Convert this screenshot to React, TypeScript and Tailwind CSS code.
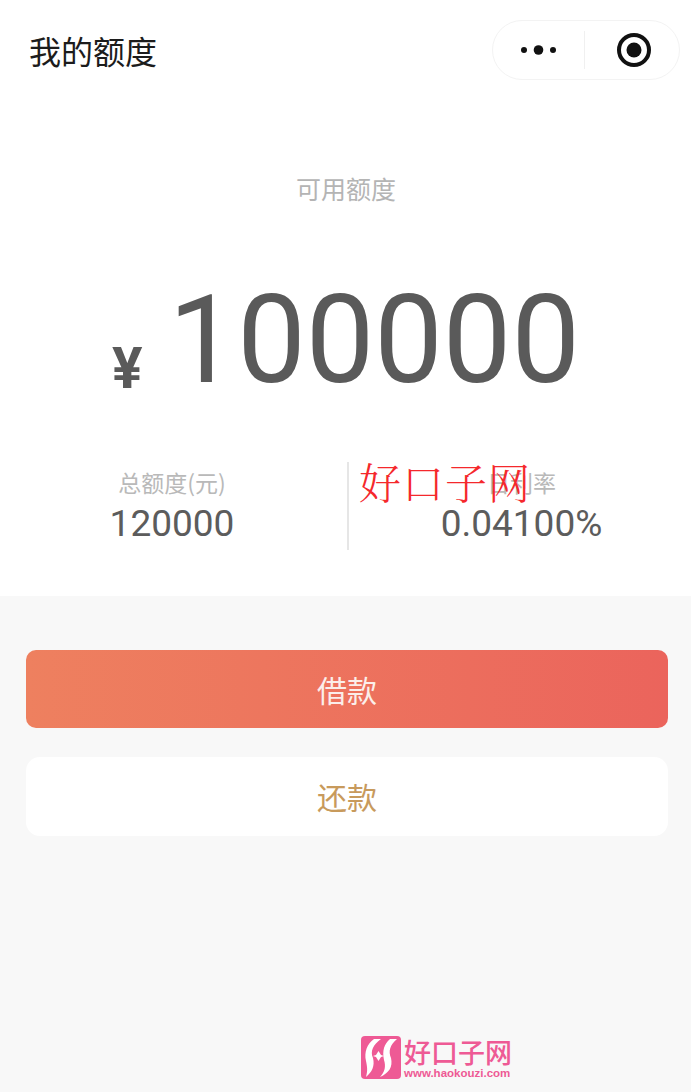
import React from 'react';

const cjk = "font-['Noto_Sans_CJK_SC',sans-serif]";
const num = "font-['Roboto','Noto_Sans_CJK_SC',sans-serif]";

const Stat = ({ label, value, className }: { label: string; value: string; className: string }) => (
  <div className={`flex flex-col items-center ${className}`}>
    <div className={`${cjk} text-[23px] leading-[30px] text-[#b9b9b9]`}>{label}</div>
    <div className={`${num} mt-[6px] text-[37px] leading-[42px] text-[#5c5c5c]`}>{value}</div>
  </div>
);

const App: React.FC = () => {
  return (
    <div className={`relative flex h-[1092px] w-[691px] flex-col overflow-hidden bg-[#f8f8f8] ${cjk}`}>
      <div className="h-[596px] bg-white">
        {/* nav bar */}
        <div className="flex items-center justify-between pl-[29px] pr-[11px] pt-[20px]">
          <h1 className="text-[32px] leading-[60px] font-normal text-[#1c1c1c]">我的额度</h1>
          <div className="flex h-[60px] w-[188px] items-center rounded-full border border-[#f3f3f3] bg-white">
            <div className="flex flex-1 items-center justify-center">
              <svg width="40" height="12" viewBox="0 0 40 12">
                <circle cx="5" cy="6" r="3" fill="#111" />
                <circle cx="19.5" cy="6" r="4.8" fill="#111" />
                <circle cx="34" cy="6" r="3" fill="#111" />
              </svg>
            </div>
            <div className="h-[38px] w-px bg-[#f0f0f0]" />
            <div className="flex w-[94px] items-center justify-center pl-[3px]">
              <svg width="36" height="36" viewBox="0 0 36 36">
                <circle cx="18" cy="18" r="15" fill="none" stroke="#111" strokeWidth="4" />
                <circle cx="18" cy="18" r="7.5" fill="#111" />
              </svg>
            </div>
          </div>
        </div>

        <div className="mt-[93px] pl-[1px] text-center text-[25px] leading-[30px] text-[#b4b4b4]">可用额度</div>

        {/* amount */}
        <div className="mt-[73px] flex h-[130px] items-end pl-[112px]">
          <span className={`${num} mb-[9px] text-[57px] leading-[56px] font-bold text-[#5a5a5a]`}>¥</span>
          <span className={`${num} ml-[26px] text-[122px] leading-[130px] text-[#5a5a5a]`}>100000</span>
        </div>

        {/* stats */}
        <div className="mt-[55px] flex h-[90px] items-center">
          <Stat label="总额度(元)" value="120000" className="w-[347px] pr-[3px]" />
          <div className="h-[88px] w-[2px] bg-[#e6e6e6]" />
          <Stat label="日利率" value="0.04100%" className="flex-1 pl-[3px]" />
        </div>
      </div>

      {/* buttons */}
      <div className="flex flex-col gap-[29px] px-[26px] pt-[54px] pr-[23px]">
        <button className="h-[78px] rounded-[10px] bg-gradient-to-r from-[#ee805f] to-[#eb645c] text-[30px] text-[#fbeeea]">
          借款
        </button>
        <button className="h-[79px] rounded-[14px] bg-white text-[30px] text-[#c89a5c]">还款</button>
      </div>

      {/* watermark over the stats */}
      <div className="absolute left-[359px] top-[455px] font-['Noto_Serif_CJK_SC','Liberation_Serif','Noto_Sans_CJK_SC',serif] text-[42px] leading-[52px] font-light tracking-[1px] text-[#f5282c]">
        好口子网
      </div>

      {/* site logo */}
      <div className="absolute left-[360px] top-[1036px] flex items-center gap-[3px]">
        <svg width="41" height="43" viewBox="0 0 41 43">
          <rect x="1" y="0" width="40" height="43" rx="4" fill="#ee5a95" />
          <path d="M14 3 L21 3 C13 9 10 15 13 22 C15 30 12 36 6 41 C8 34 7 30 6 25 C4 16 7 8 14 3 Z" fill="#fff" />
          <path d="M30 3 L37 3 C30 9 28 15 31 22 C33 31 29 37 20 41 C25 36 26 30 24 24 C22 15 24 8 30 3 Z" fill="#fff" />
          <path d="M18.5 15 L21 19 L24 20 L21 21 L18.5 25 L16 21 L13 20 L16 19 Z" fill="#fff" />
        </svg>
        <div className="flex flex-col items-start">
          <div className="text-[27px] leading-[30px] font-medium tracking-[0px] text-[#ee5a95]">好口子网</div>
          <div className="font-['Liberation_Sans',sans-serif] text-[11.5px] leading-[12px] font-bold text-[#ee5a95]">
            www.haokouzi.com
          </div>
        </div>
      </div>
    </div>
  );
};

export default App;
